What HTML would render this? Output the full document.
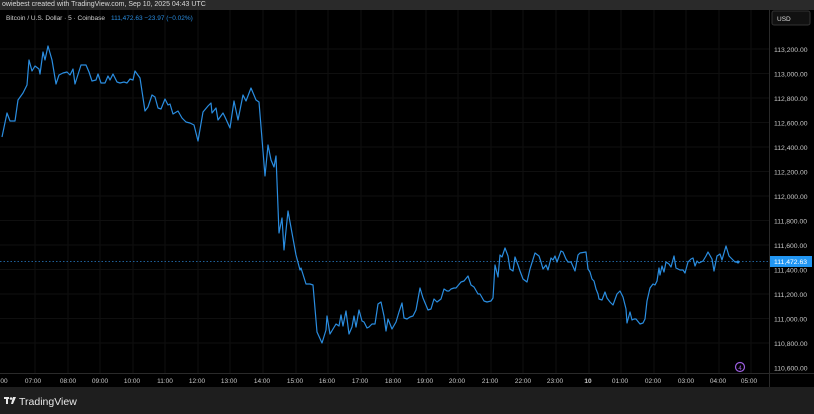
<!DOCTYPE html>
<html><head><meta charset="utf-8"><style>
body{margin:0;width:814px;height:414px;background:#1e1e1e;overflow:hidden;font-family:"Liberation Sans",sans-serif;position:relative}
.top{position:absolute;left:0;top:0;width:814px;height:10px;background:#2a2a2a;color:#d8d8d8;font-size:7px;line-height:9px;padding-left:2px}
.chart{position:absolute;left:0;top:10px;width:814px;height:377px;background:#000}
.foot{position:absolute;left:0;top:387px;width:814px;height:27px;background:#1f1f1f}
</style></head><body>
<div class="top">owiebest created with TradingView.com, Sep 10, 2025 04:43 UTC</div>
<div class="chart"></div>
<svg style="position:absolute;left:0;top:0" width="814" height="414" font-family="Liberation Sans, sans-serif">
<g stroke="#0f0f0f" stroke-width="1">
<line x1="0" y1="49" x2="769" y2="49"/><line x1="0" y1="73.5" x2="769" y2="73.5"/><line x1="0" y1="98" x2="769" y2="98"/><line x1="0" y1="122.5" x2="769" y2="122.5"/><line x1="0" y1="147" x2="769" y2="147"/><line x1="0" y1="171.5" x2="769" y2="171.5"/><line x1="0" y1="196" x2="769" y2="196"/><line x1="0" y1="220.5" x2="769" y2="220.5"/><line x1="0" y1="245" x2="769" y2="245"/><line x1="0" y1="269.5" x2="769" y2="269.5"/><line x1="0" y1="294" x2="769" y2="294"/><line x1="0" y1="318.5" x2="769" y2="318.5"/><line x1="0" y1="343" x2="769" y2="343"/>
<line x1="35" y1="10" x2="35" y2="373"/><line x1="68" y1="10" x2="68" y2="373"/><line x1="100" y1="10" x2="100" y2="373"/><line x1="133" y1="10" x2="133" y2="373"/><line x1="165" y1="10" x2="165" y2="373"/><line x1="198" y1="10" x2="198" y2="373"/><line x1="230" y1="10" x2="230" y2="373"/><line x1="263" y1="10" x2="263" y2="373"/><line x1="296" y1="10" x2="296" y2="373"/><line x1="328" y1="10" x2="328" y2="373"/><line x1="361" y1="10" x2="361" y2="373"/><line x1="393" y1="10" x2="393" y2="373"/><line x1="426" y1="10" x2="426" y2="373"/><line x1="458" y1="10" x2="458" y2="373"/><line x1="491" y1="10" x2="491" y2="373"/><line x1="523" y1="10" x2="523" y2="373"/><line x1="556" y1="10" x2="556" y2="373"/><line x1="589" y1="10" x2="589" y2="373"/><line x1="621" y1="10" x2="621" y2="373"/><line x1="654" y1="10" x2="654" y2="373"/><line x1="686" y1="10" x2="686" y2="373"/><line x1="719" y1="10" x2="719" y2="373"/><line x1="751" y1="10" x2="751" y2="373"/>
</g>
<line x1="769.5" y1="10" x2="769.5" y2="387" stroke="#2a2a2a"/>
<line x1="0" y1="373.5" x2="814" y2="373.5" stroke="#2a2a2a"/>
<line x1="0" y1="261.5" x2="769" y2="261.5" stroke="#1f5f99" stroke-dasharray="1.5,2"/>
<polyline fill="none" stroke="#2a8de0" stroke-width="1.2" stroke-linejoin="round" points="2,137 7,113 10,121 15,121 18,100 23,93 27,85 29,60 32,71 35,66 39,69 40,74 43,52 45,60 48,46 52,60 56,84 59,75 63,73 67,72 70,75 73,69 75,84 81,65 86,65 89,72 92,81 96,80 98,74 101,83 105,83 108,76 110,80 113,74 117,82 120,83 124,82 127,83 130,79 133,80 135,71 140,78 145,111 148,107 152,95 155,97 158,108 161,109 165,99 168,105 170,104 173,114 178,111 182,118 186,122 190,123 194,125 198,141 203,112 208,106 211,103 212,113 216,108 218,120 223,113 225,117 230,128 234,101 238,120 243,95 246,101 251,88 256,100 259,102 265,176 268,145 271,160 274,167 276,156 279,233 282,218 284,250 288,211 296,255 300,270 301,268 306,284 310,284 313,285 317,332 322,343 326,330 327,316 330,334 333,329 336,324 339,326 341,315 343,326 346,311 349,334 352,327 354,316 356,327 359,310 362,321 364,322 367,328 369,327 372,324 375,324 378,304 381,302 384,316 386,331 388,319 392,329 396,322 399,312 402,303 404,318 407,319 410,317 413,316 416,310 420,288 423,298 428,310 431,309 434,299 437,302 441,299 444,289 447,291 449,291 451,289 454,288 456,288 461,282 464,281 468,276 471,285 474,287 478,294 480,294 484,301 487,302 491,301 493,298 495,265 498,277 500,255 502,257 505,248 508,256 510,269 513,271 515,257 518,265 520,271 523,279 527,282 530,269 535,253 539,256 541,262 543,269 546,265 548,270 551,258 553,260 555,256 557,262 561,251 563,252 566,259 568,262 571,262 575,271 578,255 580,253 586,252 588,269 590,272 592,279 594,281 596,289 598,294 599,299 602,300 605,292 607,298 610,302 613,305 617,294 620,291 623,297 626,309 627,323 630,312 632,320 634,319 636,319 640,324 643,323 645,319 647,301 650,288 653,284 655,285 657,281 659,268 660,275 662,266 664,272 666,262 669,264 671,267 674,256 676,268 680,270 683,270 685,273 688,262 691,259 693,258 695,266 697,261 699,263 703,261 706,256 708,252 712,259 714,271 717,256 720,254 722,260 726,246 729,256 732,259 735,262 738,262"/>
<circle cx="738" cy="262" r="1.5" fill="#2a8de0"/>
<text x="6" y="20" font-size="6.5" fill="#d0d0d0">Bitcoin / U.S. Dollar · 5 · Coinbase</text>
<text x="111" y="20" font-size="6.5" fill="#2a8de0">111,472.63  −23.97 (−0.02%)</text>
<rect x="772" y="11" width="38" height="14" rx="2" fill="#111" stroke="#333"/>
<text x="777" y="21" font-size="6.5" fill="#ddd">USD</text>
<g font-size="6.8" fill="#c8c8c8">
<text x="774" y="52">113,200.00</text><text x="774" y="76.5">113,000.00</text><text x="774" y="101">112,800.00</text><text x="774" y="125.5">112,600.00</text><text x="774" y="150">112,400.00</text><text x="774" y="174.5">112,200.00</text><text x="774" y="199">112,000.00</text><text x="774" y="223.5">111,800.00</text><text x="774" y="248">111,600.00</text><text x="774" y="272.5">111,400.00</text><text x="774" y="297">111,200.00</text><text x="774" y="321.5">111,000.00</text><text x="774" y="346">110,800.00</text><text x="774" y="370.5">110,600.00</text>
</g>
<rect x="770" y="256" width="42" height="11" fill="#2196f3"/>
<text x="774" y="264" font-size="6.8" fill="#fff">111,472.63</text>
<g font-size="6.5" fill="#c8c8c8" text-anchor="middle">
<text x="4" y="383">00</text><text x="33" y="383">07:00</text><text x="68" y="383">08:00</text><text x="100" y="383">09:00</text><text x="132" y="383">10:00</text><text x="165" y="383">11:00</text><text x="197" y="383">12:00</text><text x="229" y="383">13:00</text><text x="262" y="383">14:00</text><text x="295" y="383">15:00</text><text x="327" y="383">16:00</text><text x="360" y="383">17:00</text><text x="393" y="383">18:00</text><text x="425" y="383">19:00</text><text x="457" y="383">20:00</text><text x="490" y="383">21:00</text><text x="523" y="383">22:00</text><text x="555" y="383">23:00</text><text x="588" y="383" font-weight="bold">10</text><text x="620" y="383">01:00</text><text x="653" y="383">02:00</text><text x="686" y="383">03:00</text><text x="718" y="383">04:00</text><text x="749" y="383">05:00</text>
</g>
<circle cx="740" cy="367" r="4.5" fill="none" stroke="#9c5ee0" stroke-width="1.2"/>
<text x="740" y="370" font-size="6" fill="#9c5ee0" text-anchor="middle">4</text>
<g fill="#e8e8e8"><rect x="4" y="397" width="5" height="2"/><rect x="6" y="397" width="2" height="7"/><circle cx="11" cy="398.5" r="1.3"/><path d="M13 397h3l-3 7h-2z"/></g>
<text x="19" y="405" font-size="10.5" fill="#e8e8e8">TradingView</text>
</svg>
</body></html>
